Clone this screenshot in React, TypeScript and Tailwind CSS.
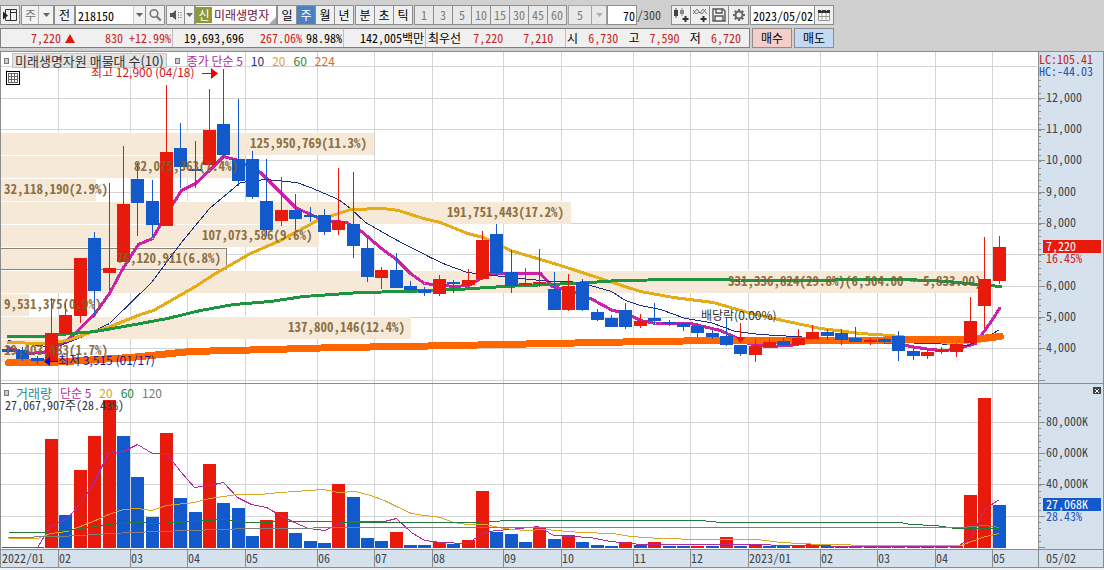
import { ReactNode } from "react";

type Point = [number, number];
// up, body top, body bottom, wick top, wick bottom
type Candle = [boolean, number, number, number, number];

const RED = "#e81a0c";
const BLUE = "#125acb";

const UP = true;
const DOWN = false;

const candles: Candle[] = [
  [DOWN, 349, 352, 348, 353],
  [DOWN, 350, 359, 347, 361],
  [DOWN, 358, 361, 356, 364],
  [UP, 333, 361, 298, 362],
  [UP, 315, 334, 303, 334],
  [UP, 258, 316, 258, 323],
  [DOWN, 238, 291, 232, 315],
  [UP, 268, 273, 183, 290],
  [UP, 204, 262, 146, 262],
  [DOWN, 179, 203, 163, 236],
  [DOWN, 201, 225, 180, 237],
  [UP, 152, 226, 85, 226],
  [DOWN, 148, 167, 123, 188],
  [DOWN, 169, 171, 141, 188],
  [UP, 130, 165, 89, 165],
  [DOWN, 124, 155, 69, 159],
  [DOWN, 159, 181, 99, 186],
  [DOWN, 159, 197, 151, 199],
  [DOWN, 201, 230, 159, 236],
  [UP, 210, 221, 177, 226],
  [DOWN, 210, 219, 194, 230],
  [DOWN, 215, 217, 207, 222],
  [DOWN, 215, 232, 209, 235],
  [UP, 221, 230, 168, 235],
  [DOWN, 224, 246, 172, 258],
  [DOWN, 248, 277, 238, 282],
  [UP, 270, 278, 267, 289],
  [DOWN, 270, 288, 253, 288],
  [DOWN, 286, 290, 281, 291],
  [DOWN, 290, 293, 287, 296],
  [UP, 279, 294, 275, 296],
  [DOWN, 282, 284, 280, 293],
  [UP, 280, 285, 269, 286],
  [UP, 240, 279, 231, 280],
  [DOWN, 234, 273, 224, 275],
  [DOWN, 272, 286, 250, 293],
  [UP, 283, 285, 268, 287],
  [UP, 282, 284, 249, 287],
  [DOWN, 289, 310, 272, 310],
  [UP, 286, 310, 274, 311],
  [DOWN, 282, 310, 279, 311],
  [DOWN, 312, 320, 309, 321],
  [DOWN, 318, 327, 315, 327],
  [DOWN, 310, 327, 303, 329],
  [UP, 321, 326, 314, 328],
  [DOWN, 318, 321, 303, 325],
  [DOWN, 322, 324, 320, 326],
  [DOWN, 323, 327, 322, 331],
  [DOWN, 326, 333, 323, 337],
  [DOWN, 333, 337, 330, 339],
  [DOWN, 336, 345, 318, 346],
  [DOWN, 345, 354, 345, 356],
  [UP, 346, 355, 339, 362],
  [UP, 342, 347, 339, 348],
  [DOWN, 341, 345, 338, 346],
  [UP, 338, 345, 329, 346],
  [UP, 332, 339, 325, 340],
  [DOWN, 332, 336, 329, 340],
  [DOWN, 333, 340, 329, 345],
  [DOWN, 338, 342, 327, 342],
  [UP, 340, 342, 338, 345],
  [DOWN, 339, 342, 338, 344],
  [DOWN, 336, 351, 331, 361],
  [DOWN, 351, 356, 348, 360],
  [UP, 352, 356, 349, 359],
  [UP, 350, 352, 347, 354],
  [UP, 344, 352, 343, 357],
  [UP, 321, 343, 297, 343],
  [UP, 279, 306, 237, 328],
  [UP, 247, 281, 236, 284],
];

const volumes: [boolean, number][] = [
  [UP, 547], [UP, 547], [UP, 547], [UP, 439], [DOWN, 515], [UP, 470], [UP, 436], [UP, 400], [DOWN, 436], [DOWN, 477],
  [DOWN, 517], [UP, 433], [DOWN, 498], [DOWN, 512], [UP, 464], [DOWN, 503], [DOWN, 508], [DOWN, 536], [UP, 520], [UP, 512],
  [DOWN, 533], [DOWN, 541], [DOWN, 543], [UP, 484], [DOWN, 497], [DOWN, 538], [DOWN, 541], [UP, 532], [DOWN, 545], [DOWN, 545],
  [UP, 542], [DOWN, 544], [UP, 540], [UP, 491], [DOWN, 532], [DOWN, 534], [DOWN, 542], [UP, 528], [DOWN, 539], [UP, 535],
  [DOWN, 542], [DOWN, 545], [DOWN, 546], [UP, 542], [DOWN, 545], [UP, 542], [DOWN, 546], [DOWN, 546], [UP, 546], [DOWN, 546],
  [UP, 537], [DOWN, 546], [UP, 545], [DOWN, 546], [DOWN, 546], [UP, 546], [UP, 544], [DOWN, 546], [DOWN, 546], [UP, 546],
  [DOWN, 546], [UP, 546], [UP, 546], [DOWN, 546], [DOWN, 546], [DOWN, 546], [UP, 546], [UP, 495], [UP, 398], [DOWN, 505],
];

const barX = (i: number) => Math.round(2 + i * 14.36);

const ma5: Point[] = [
  [8, 347], [27, 353], [43, 352], [67, 340], [94, 314], [109, 293], [123, 267], [138, 244], [152, 238], [167, 212],
  [181, 190], [195, 183], [209, 170], [223, 156], [238, 160], [260, 172], [280, 192], [295, 207], [310, 214], [324, 220],
  [346, 222], [361, 231], [381, 248], [396, 259], [410, 273], [424, 283], [453, 286], [468, 285], [482, 277], [490, 273],
  [540, 273], [552, 286], [569, 290], [592, 299], [612, 310], [624, 312], [640, 320], [655, 323], [690, 323], [720, 330],
  [748, 343], [765, 346], [790, 345], [806, 342], [830, 339], [860, 341], [893, 342], [910, 346], [930, 349], [942, 350],
  [955, 349], [975, 343], [985, 329], [992, 319], [999, 308],
];
const ma10: Point[] = [
  [8, 340], [30, 344], [55, 347], [80, 337], [109, 323], [151, 282], [181, 242], [209, 208], [240, 182], [265, 179],
  [296, 182], [310, 187], [338, 199], [350, 208], [365, 222], [395, 239], [430, 257], [445, 264], [467, 272], [485, 274],
  [510, 277], [550, 281], [570, 281], [590, 285], [611, 291], [625, 300], [640, 305], [660, 309], [685, 318], [710, 322],
  [735, 331], [760, 334], [893, 342], [933, 343], [967, 345], [985, 338], [999, 329],
];
const ma20: Point[] = [
  [8, 342], [40, 343], [67, 340], [90, 332], [110, 326], [140, 314], [153, 310], [195, 286], [215, 273], [250, 253],
  [280, 240], [317, 220], [350, 209], [383, 208], [398, 210], [423, 218], [440, 222], [467, 233], [483, 237], [510, 250],
  [560, 265], [600, 278], [640, 291], [673, 297], [713, 302], [747, 312], [773, 318], [820, 328], [860, 333], [890, 335],
  [917, 338], [950, 343], [987, 340],
];
const ma60: Point[] = [
  [8, 336], [43, 336], [60, 334], [95, 331], [140, 323], [167, 318], [200, 310], [233, 304], [270, 301], [303, 296],
  [360, 292], [403, 291], [457, 289], [503, 286], [550, 284], [590, 282], [618, 280], [677, 279], [720, 279], [740, 280],
  [820, 280], [850, 279], [900, 279], [933, 280], [967, 283], [1000, 286],
];
const ma224: Point[] = [
  [8, 362], [50, 362], [130, 357], [190, 351], [270, 349], [337, 347], [403, 346], [453, 345], [550, 343], [647, 341],
  [720, 340], [820, 340], [950, 339], [980, 338], [1000, 336],
];

const vol5: Point[] = [
  [8, 547], [37, 547], [50, 526], [67, 518], [80, 503], [93, 483], [108, 453], [123, 451], [137, 444], [152, 453],
  [166, 453], [180, 471], [194, 487], [209, 485], [223, 482], [237, 497], [251, 504], [266, 507], [280, 515], [294, 522],
  [308, 528], [324, 530], [338, 524], [350, 521], [384, 521], [396, 518], [411, 532], [424, 540], [440, 542], [467, 543],
  [482, 533], [495, 530], [510, 529], [538, 526], [553, 535], [570, 536], [590, 537], [610, 541], [640, 544], [740, 544],
  [800, 545], [860, 546], [957, 546], [970, 538], [985, 508], [999, 499],
];
const vol20: Point[] = [
  [8, 538], [37, 538], [50, 533], [67, 531], [95, 520], [108, 514], [123, 509], [137, 508], [151, 510], [166, 505],
  [194, 502], [209, 498], [237, 494], [260, 494], [280, 492], [323, 489], [338, 492], [355, 491], [370, 495], [384, 500],
  [396, 506], [411, 513], [424, 515], [440, 517], [453, 522], [467, 524], [485, 524], [503, 528], [525, 530], [545, 529],
  [580, 532], [612, 533], [630, 536], [660, 538], [700, 539], [757, 539], [780, 542], [820, 544], [880, 545], [960, 545],
  [985, 536], [999, 533],
];
const vol60: Point[] = [
  [8, 532], [40, 532], [67, 530], [108, 524], [130, 522], [160, 523], [190, 521], [223, 519], [245, 522], [300, 521],
  [375, 522], [470, 522], [510, 520], [700, 520], [720, 522], [900, 522], [910, 524], [935, 525], [955, 528], [999, 528],
];
const vol120: Point[] = [
  [8, 537], [60, 536], [130, 532], [190, 530], [250, 528], [375, 527], [960, 527], [985, 525], [999, 527],
];

const bands = [
  { y: 133, w: 374, x: 250, label: "125,950,769(11.3%)" },
  { y: 156, w: 245, x: 134, label: "82,075,363(7.4%)" },
  { y: 179, w: 96, x: 4, label: "32,118,190(2.9%)" },
  { y: 202, w: 571, x: 447, label: "191,751,443(17.2%)" },
  { y: 225, w: 319, x: 202, label: "107,073,586(9.6%)" },
  { y: 248, w: 227, x: 117, label: "76,120,911(6.8%)" },
  { y: 271, w: 986, x: 728, label: "331,336,824(29.8%)(6,504.00 ~ 5,833.00)" },
  { y: 294, w: 29, x: 4, label: "9,531,375(0.9%)" },
  { y: 317, w: 411, x: 288, label: "137,800,146(12.4%)" },
  { y: 340, w: 56, x: 4, label: "19,403,483(1.7%)" },
];

const months = [
  { x: 0, label: "2022/01" },
  { x: 58, label: "02" },
  { x: 130, label: "03" },
  { x: 187, label: "04" },
  { x: 245, label: "05" },
  { x: 317, label: "06" },
  { x: 374, label: "07" },
  { x: 432, label: "08" },
  { x: 503, label: "09" },
  { x: 561, label: "10" },
  { x: 633, label: "11" },
  { x: 690, label: "12" },
  { x: 748, label: "2023/01" },
  { x: 820, label: "02" },
  { x: 877, label: "03" },
  { x: 935, label: "04" },
  { x: 992, label: "05" },
];

const priceGrid = [66, 98, 129, 160, 192, 223, 254, 286, 317, 348, 380];
const priceLabels = [
  { y: 98, label: "12,000" },
  { y: 129, label: "11,000" },
  { y: 160, label: "10,000" },
  { y: 192, label: "9,000" },
  { y: 223, label: "8,000" },
  { y: 286, label: "6,000" },
  { y: 317, label: "5,000" },
  { y: 348, label: "4,000" },
];
const volumeGrid = [422, 453, 484, 516];
const volumeLabels = [
  { y: 422, label: "80,000K" },
  { y: 453, label: "60,000K" },
  { y: 484, label: "40,000K" },
];

const minutes = ["1", "3", "5", "10", "15", "30", "45", "60"];

const toPoints = (pts: Point[]) => pts.map(([x, y]) => `${x + 0.5},${y + 0.5}`).join(" ");

function Line({ pts, color, width = 1 }: { pts: Point[]; color: string; width?: number }) {
  return (
    <polyline
      points={toPoints(pts)}
      fill="none"
      stroke={color}
      strokeWidth={width}
      strokeLinejoin="round"
      strokeLinecap={width > 1 ? "round" : "butt"}
      shapeRendering="crispEdges"
    />
  );
}

function Grid({ rows, top, bottom }: { rows: number[]; top: number; bottom: number }) {
  return (
    <g fill="#d4d4d4">
      {rows.map((y) => (
        <rect key={y} x={1} y={y} width={1036} height={1} />
      ))}
      {months.slice(1).map((m) => (
        <rect key={m.x} x={m.x} y={top} width={1} height={bottom - top} />
      ))}
    </g>
  );
}

function Ticks({ from, to, step, major }: { from: number; to: number; step: number; major: number[] }) {
  const minor: number[] = [];
  for (let y = to; y >= from; y -= step) minor.push(Math.round(y));
  return (
    <g fill="#8c8c8c">
      {minor.map((y) => (
        <rect key={y} x={0} y={y} width={2} height={1} />
      ))}
      {major.map((y) => (
        <rect key={`m${y}`} x={0} y={y} width={6} height={1} />
      ))}
    </g>
  );
}

function Arrow({ muted = false }: { muted?: boolean }) {
  return (
    <svg viewBox="0 0 7 4" className={`h-1 w-[7px] ${muted ? "text-[#b0b0b0]" : "text-[#666]"}`}>
      <path d="M0 0h7L3.5 4z" fill="currentColor" />
    </svg>
  );
}

function ToolButton({ label, className = "", children }: { label?: string; className?: string; children: ReactNode }) {
  return (
    <button
      aria-label={label}
      className={`-mr-px flex h-5 shrink-0 items-center justify-center border border-[#8e8e8e] leading-none ${className}`}
    >
      {children}
    </button>
  );
}

function Toolbar() {
  return (
    <div className="flex h-7 items-start whitespace-nowrap pt-[5px] text-black">
      <ToolButton label="패널" className="w-5 bg-[#f0f0f0]">
        <svg viewBox="0 0 14 14" className="h-[14px] w-[14px]">
          <path d="M2.500 1.500h11v11h-11zM7.500 2v10M7.500 4.500h6" fill="none" stroke="#333" />
          <path d="M0 3.500l5 4-5 4z" fill="#222" />
        </svg>
      </ToolButton>
      <div className="relative ml-[2px] h-5 w-[33px] shrink-0 border border-[#8e8e8e] bg-[#f3f3f3]">
        <select aria-label="종목 구분" className="h-full w-full appearance-none bg-transparent pl-[3px] leading-none text-[#777]">
          <option>주</option>
        </select>
        <span className="pointer-events-none absolute inset-y-0 right-0 flex w-[15px] items-center justify-center border-l border-[#b5b5b5] bg-[#f3f3f3]">
          <Arrow />
        </span>
      </div>
      <ToolButton className="w-[21px] bg-[#f0f0f0]">전</ToolButton>
      <input
        aria-label="종목코드"
        defaultValue="218150"
        className="ml-[1px] h-5 w-[58px] shrink-0 border border-r-0 border-[#8e8e8e] bg-white pl-[2px]"
      />
      <ToolButton label="코드 목록" className="w-[13px] border-l-[#ccc] bg-[#f3f3f3]"><Arrow /></ToolButton>
      <ToolButton label="검색" className="w-5 bg-[#f0f0f0]">
        <svg viewBox="0 0 14 14" className="h-[14px] w-[14px]" fill="none" stroke="#777" strokeWidth="1.600">
          <circle cx="6" cy="5.500" r="3.800" />
          <path d="M8.800 8.500l4 4" strokeWidth="2.200" />
        </svg>
      </ToolButton>
      <ToolButton label="소리" className="ml-[2px] w-[19px] bg-[#f0f0f0]">
        <svg viewBox="0 0 14 12" className="h-3 w-[14px]" fill="#555">
          <path d="M1 4h2.500L7 1v10L3.500 8H1z" />
          <path d="M9 3h1v1H9zM9 5.500h1v1H9zM9 8h1v1H9zM11.500 3h1v1h-1zM11.500 5.500h1v1h-1zM11.500 8h1v1h-1z" />
        </svg>
      </ToolButton>
      <ToolButton label="소리 설정" className="w-[11px] bg-[#f3f3f3]"><Arrow /></ToolButton>
      <button className="relative ml-[1px] flex h-5 w-[82px] shrink-0 items-center overflow-hidden border border-[#8e8e8e] bg-white text-left leading-none">
        <span className="flex h-4 w-4 shrink-0 items-center justify-center bg-[#8f9a35] text-white">신</span>
        <span className="ml-[2px] text-[#6b1040]">미래생명자</span>
        <svg viewBox="0 0 7 7" className="absolute bottom-0 right-0 h-[7px] w-[7px]"><path d="M7 0v7H0z" fill="#aaa" /></svg>
      </button>
      <div className="flex">
        {["일", "주", "월", "년"].map((t) => (
          <ToolButton key={t} className={`w-5 ${t === "주" ? "bg-[#4a80c4] text-white" : "bg-[#f0f0f0]"}`}>{t}</ToolButton>
        ))}
      </div>
      <div className="ml-[2px] flex">
        {["분", "초", "틱"].map((t) => (
          <ToolButton key={t} className="w-5 bg-[#f0f0f0]">{t}</ToolButton>
        ))}
      </div>
      <div className="ml-[2px] flex">
        {minutes.map((t) => (
          <ToolButton key={t} className="w-5 bg-[#e9e9e9] text-[#7c7c7c]">{t}</ToolButton>
        ))}
      </div>
      <div className="relative ml-[2px] h-5 w-[39px] shrink-0 border border-[#a5a5a5] bg-[#e9e9e9]">
        <select aria-label="분 단위" className="h-full w-full appearance-none bg-transparent pl-2 leading-none text-[#7c7c7c]">
          <option>5</option>
        </select>
        <span className="pointer-events-none absolute inset-y-0 right-0 flex w-[15px] items-center justify-center border-l border-[#a5a5a5] bg-[#e9e9e9]">
          <Arrow muted />
        </span>
      </div>
      <label className="flex shrink-0 items-center">
        <input aria-label="봉 개수" defaultValue="70" className="h-5 w-[30px] border border-[#8e8e8e] bg-white pr-px text-right" />
        <span className="text-[#444]">/300</span>
      </label>
      <div className="ml-[10px] flex">
        <ToolButton label="차트 추가" className="w-5 bg-[#f0f0f0]">
          <svg viewBox="0 0 16 16" className="h-4 w-4">
            <path d="M1 3h4v6H1zM2.500 1h1v10h-1z" fill="#444" />
            <path d="M7 3h4v4H7zM8.500 1h1v8h-1z" fill="#888" />
            <path d="M12.500 9v6M9.500 12h6" stroke="#333" strokeWidth="2" />
          </svg>
        </ToolButton>
        <ToolButton label="지표 추가" className="w-5 bg-[#f0f0f0]">
          <svg viewBox="0 0 16 16" className="h-4 w-4" fill="none" stroke="#777">
            <path d="M1 7l4-5 3 4 3-4 4 5M1 3l3 4 3-2 3 2 4-5" />
            <path d="M11.500 9v6M8.500 12h6" stroke="#333" strokeWidth="2" />
          </svg>
        </ToolButton>
        <ToolButton label="저장" className="w-5 bg-[#f0f0f0]">
          <svg viewBox="0 0 14 14" className="h-[14px] w-[14px]" fill="none" stroke="#555" strokeWidth="1.400">
            <path d="M1 1h10l2 2v10H1zM4 1v4h6V1M3 13V8h8v5" />
          </svg>
        </ToolButton>
        <ToolButton label="설정" className="w-[21px] bg-[#f0f0f0]">
          <svg viewBox="0 0 14 14" className="h-[14px] w-[14px]" fill="none" stroke="#666">
            <circle cx="7" cy="7" r="3.500" strokeWidth="2" />
            <path d="M7 1v2M7 11v2M1 7h2M11 7h2M2.800 2.800l1.400 1.400M9.800 9.800l1.400 1.400M11.200 2.800L9.800 4.200M4.200 9.800l-1.400 1.400" strokeWidth="2.200" />
          </svg>
        </ToolButton>
      </div>
      <input
        aria-label="기준일"
        defaultValue="2023/05/02"
        className="ml-[2px] h-5 w-[65px] shrink-0 border border-[#8e8e8e] bg-white pl-[2px]"
      />
      <ToolButton label="달력" className="-ml-px w-5 bg-[#f0f0f0]">
        <svg viewBox="0 0 12 12" className="h-3 w-3">
          <path d="M.500 2h11v9.500H.500zM.500 7.500h11M4 3v8.500M8 3v8.500" fill="#fff" stroke="#999" />
          <path d="M0 1h12v3H0z" fill="#333" />
          <path d="M3 0h1v2H3zM8 0h1v2H8z" fill="#ddd" />
        </svg>
      </ToolButton>
    </div>
  );
}

function QuoteBar() {
  return (
    <div className="flex h-[23px] items-start whitespace-pre leading-none">
      <div className="flex h-5 w-[750px] shrink-0 border border-[#808080] bg-[#f0f0f0] text-[#c4251a]">
        <div className="flex w-[172px] items-center justify-end border-r border-[#c0c0c0] pr-px">
          <span>7,220</span>
          <svg viewBox="0 0 10 9" className="ml-1 h-[9px] w-[10px]"><path d="M5 0l5 9H0z" fill="#dd1a10" /></svg>
          <span className="ml-[30px]">830</span>
          <span className="ml-[6px]">+12.99%</span>
        </div>
        <div className="flex w-[171px] items-center justify-end border-r border-[#c0c0c0] pr-px">
          <span className="text-black">19,693,696</span>
          <span className="ml-4">267.06%</span>
          <span className="ml-1 text-black">98.98%</span>
        </div>
        <div className="flex w-[82px] items-center justify-end border-r border-[#c0c0c0] pr-px text-black">142,005백만</div>
        <div className="flex w-[140px] items-center border-r border-[#c0c0c0] pl-[2px]">
          <span className="text-black">최우선</span>
          <span className="ml-3">7,220</span>
          <span className="ml-5">7,210</span>
        </div>
        <div className="flex flex-1 items-center justify-between pl-px pr-2">
          <span className="text-black">시</span>
          <span>6,730</span>
          <span className="text-black">고</span>
          <span>7,590</span>
          <span className="text-black">저</span>
          <span>6,720</span>
        </div>
      </div>
      <button className="ml-[2px] h-5 w-10 border border-[#8e8e8e] bg-[#f4cfca] leading-none">매수</button>
      <button className="ml-[2px] h-5 w-10 border border-[#8e8e8e] bg-[#c3dbf2] leading-none">매도</button>
    </div>
  );
}

function PriceChart() {
  return (
    <div className="relative min-w-0 flex-1 border-l border-[#8c8c8c] bg-white">
      <svg viewBox="1 52 1037 331" preserveAspectRatio="none" className="block h-[331px] w-full">
        <Grid rows={priceGrid} top={52} bottom={383} />
        {bands.map((b) => (
          <rect key={b.y} x={1} y={b.y - 1} width={b.w - 1} height={23} fill="#fff" />
        ))}
        {bands.map((b) => (
          <rect key={b.y} x={1} y={b.y} width={b.w - 1} height={22} fill="#f6e9d8" />
        ))}
        <rect x={0.5} y={248.5} width={226} height={21} fill="none" stroke="#8a8378" shapeRendering="crispEdges" />
        <Line pts={ma5} color="#cc22aa" width={3} />
        <Line pts={ma10} color="#1c2f85" />
        <Line pts={ma20} color="#e6ac18" width={3} />
        <Line pts={ma60} color="#1c9440" width={3} />
        <Line pts={ma224} color="#ff6600" width={7} />
        {candles.map(([up, top, bottom, high, low], i) => (
          <g key={i} fill={up ? RED : BLUE}>
            <rect x={barX(i)} y={top} width={13} height={bottom - top} />
            <rect x={barX(i) + 6} y={high} width={1} height={low - high} />
          </g>
        ))}
        <path d="M740 323h1v14h4.500l-5 6-5-6h4.500z" fill={RED} />
        <g className="text-[13px] font-bold" fill="#7d602f" fillOpacity={0.9}>
          {bands.map((b) => (
            <text key={b.y} x={b.x} y={b.y + 15}>{b.label}</text>
          ))}
        </g>
        <g className="text-[12px] font-['Noto_Sans_CJK_KR',sans-serif]">
          <text x={91} y={77} fill="#d01818">최고 12,900 (04/18)</text>
          <path d="M202 73h9v-5l7 5.500-7 5.500v-5h-9z" fill="#f00000" />
          <text x={58} y={365} fill="#1a1a9c">최저 3,515 (01/17)</text>
          <path d="M58 361h-8v-4l-6 4.500 6 4.500v-4h8z" fill="#0000f0" />
          <text x={701} y={320} fill="#333">배당락(0.00%)</text>
        </g>
      </svg>
      <div className="absolute left-[3px] top-[1px] flex h-[15px] items-center whitespace-pre text-[13px] leading-none font-['Noto_Sans_CJK_KR',sans-serif]">
        <span className="h-[6px] w-[5px] border border-[#777] bg-[#ccc]" />
        <span className="ml-[3px] flex h-[15px] items-center border border-[#c4c4c4] bg-[#e3e3e3] px-[2px] text-[#333]">미래생명자원 매물대 수(10)</span>
        <span className="ml-2 h-[6px] w-[5px] border border-[#777] bg-[#ccc]" />
        <span className="ml-[7px] flex gap-2 text-[12px]">
          <span className="text-[#b228a0]">종가 단순 5</span>
          <span className="text-[#15308e]">10</span>
          <span className="text-[#dba21c]">20</span>
          <span className="text-[#15883a]">60</span>
          <span className="text-[#e06c18]">224</span>
        </span>
      </div>
      <button aria-label="표 보기" className="absolute left-[5px] top-[19px] flex h-[14px] w-[14px] items-center justify-center border border-black bg-white">
        <svg viewBox="0 0 10 10" className="h-[10px] w-[10px]" fill="none" stroke="#666" shapeRendering="crispEdges">
          <path d="M.500.500h9v9h-9zM3.500 0v10M6.500 0v10M0 3.500h10M0 6.500h10" />
        </svg>
      </button>
    </div>
  );
}

function PriceAxis() {
  return (
    <svg viewBox="0 52 64 331" className="block h-[331px] w-[66px] shrink-0 border-l border-r border-[#8c8c8c] bg-[#d6e1ee]">
      <Ticks from={78} to={380} step={6.25} major={priceGrid.slice(1)} />
      <text x={0} y={64} fill="#c8201c">LC:105.41</text>
      <text x={0} y={76} fill="#1c58b4">HC:-44.03</text>
      {priceLabels.map((p) => (
        <text key={p.y} x={7} y={p.y + 4} fill="#444">{p.label}</text>
      ))}
      <rect x={4} y={240} width={58} height={13} fill={RED} />
      <text x={7} y={251} fill="#fff">7,220</text>
      <text x={7} y={263} fill="#c8201c">16.45%</text>
    </svg>
  );
}

function VolumeChart() {
  return (
    <div className="relative min-w-0 flex-1 border-l border-[#8c8c8c] bg-white">
      <svg viewBox="1 384 1037 165" preserveAspectRatio="none" className="block h-[165px] w-full">
        <Grid rows={volumeGrid} top={384} bottom={549} />
        {volumes.map(([up, top], i) => (
          <rect key={i} x={barX(i)} y={top} width={13} height={548 - top} fill={up ? RED : BLUE} />
        ))}
        <Line pts={vol5} color="#b02a9c" />
        <Line pts={vol20} color="#d9a628" />
        <Line pts={vol60} color="#25793c" />
        <Line pts={vol120} color="#808080" />
        <text x={5} y={410} fill="#333">27,067,907주(28.43%)</text>
      </svg>
      <div className="absolute left-[3px] top-[1px] flex h-[15px] items-center whitespace-pre leading-none font-['Noto_Sans_CJK_KR',sans-serif]">
        <span className="h-[6px] w-[5px] border border-[#777] bg-[#ccc]" />
        <span className="ml-[7px] flex items-baseline gap-2">
          <span className="text-[13px] text-[#2f8c8c]">거래량</span>
          <span className="text-[#b228a0]">단순 5</span>
          <span className="text-[#dba21c]">20</span>
          <span className="text-[#15883a]">60</span>
          <span className="text-[#777]">120</span>
        </span>
      </div>
    </div>
  );
}

function VolumeAxis() {
  return (
    <div className="relative shrink-0">
      <svg viewBox="0 384 64 165" className="block h-[165px] w-[66px] border-l border-r border-[#8c8c8c] bg-[#d6e1ee]">
        <Ticks from={396} to={547} step={6.25} major={[...volumeGrid, 547]} />
        {volumeLabels.map((v) => (
          <text key={v.y} x={7} y={v.y + 4} fill="#444">{v.label}</text>
        ))}
        <rect x={4} y={498} width={58} height={13} fill={BLUE} />
        <text x={7} y={509} fill="#fff">27,068K</text>
        <text x={7} y={521} fill="#1c58b4">28.43%</text>
      </svg>
      <button aria-label="닫기" className="absolute right-[3px] top-[3px] flex h-[7px] w-2 items-center justify-center bg-[#444]">
        <svg viewBox="0 0 4 4" className="h-1 w-1" stroke="#fff"><path d="M0 0l4 4M4 0L0 4" /></svg>
      </button>
    </div>
  );
}

function DateAxis() {
  return (
    <div className="flex h-[19px] border-y border-l border-[#8c8c8c] bg-[#d6e1ee] leading-4 text-[#444]">
      <div className="flex min-w-0 flex-1">
        {months.map((m, i) => (
          <span
            key={m.x}
            className={`min-w-0 basis-0 overflow-visible whitespace-nowrap ${i > 0 ? "border-l border-[#8c8c8c]" : "pl-px"}`}
            style={{ flexGrow: (months[i + 1]?.x ?? 1038) - m.x - (i === 0 ? 2 : 1) }}
          >
            {m.label}
          </span>
        ))}
      </div>
      <span className="w-[66px] shrink-0 border-x border-[#8c8c8c] pl-[7px]">05/02</span>
    </div>
  );
}

export default function App() {
  return (
    <div className="flex w-full flex-col overflow-hidden bg-[#d0d0d0] text-[12px] font-['Noto_Sans_Mono_CJK_KR','Noto_Sans_CJK_KR',monospace]">
      <Toolbar />
      <QuoteBar />
      <main className="border-t border-[#8c8c8c]">
        <div className="flex border-b border-[#8c8c8c]">
          <PriceChart />
          <PriceAxis />
        </div>
        <div className="flex">
          <VolumeChart />
          <VolumeAxis />
        </div>
        <DateAxis />
      </main>
      <div className="h-[2px] bg-[#f0f0f0]" />
    </div>
  );
}
